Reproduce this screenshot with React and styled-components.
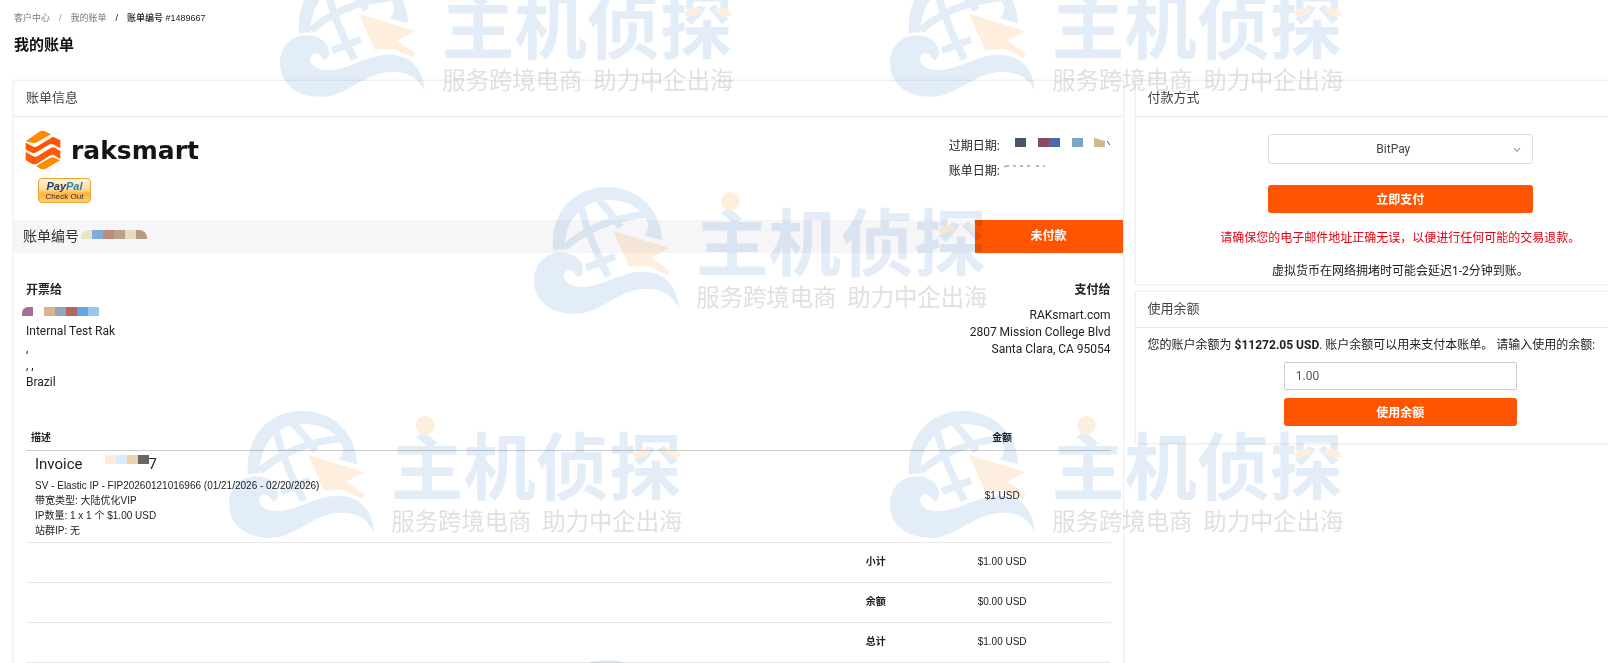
import React, { useState } from "react";
import styled, { createGlobalStyle } from "styled-components";

const GlobalStyle = createGlobalStyle`
  * {
    box-sizing: border-box;
  }
  body {
    margin: 0;
    background: #fff;
    color: #222;
    font-family: Roboto, "Noto Sans CJK SC", sans-serif;
    font-size: 12px;
    line-height: 17px;
  }
`;

const watermarks = [
  { left: 280, top: -30 },
  { left: 890, top: -30 },
  { left: 534, top: 187 },
  { left: 229, top: 411 },
  { left: 890, top: 411 },
  { left: 534, top: 660 },
];

const totals = [
  { label: "小计", value: "$1.00 USD" },
  { label: "余额", value: "$0.00 USD" },
  { label: "总计", value: "$1.00 USD" },
];

function Watermark({ left, top }) {
  return (
    <WatermarkSvg
      style={{ left, top }}
      width="454"
      height="128"
      viewBox="43 52 1362 384"
      aria-hidden="true"
    >
      <g fill="#e2edf8">
        <path d="M100 243C90 120 170 52 263 52C355 52 425 120 427 212L371 197Q385 188 386 165C372 115 320 90 263 90C190 92 133 150 135 240Q118 238 100 243Z" />
        <path d="M478 415C470 330 420 305 365 306C300 308 250 352 185 352C150 352 132 335 133 318C135 300 155 296 165 310Q170 318 175 323Q190 320 190 298C188 265 155 248 120 248C75 250 43 285 43 330C43 395 95 432 165 432C250 432 290 357 385 357C430 357 460 380 478 415Z" />
        <g fill="none" stroke="#e2edf8" strokeWidth="22">
          <path d="M136 232Q230 150 378 134" />
          <path d="M184 108Q200 190 266 320" />
          <path d="M236 90Q268 122 302 172" />
          <path d="M199 294L286 260" />
        </g>
        <text x="528" y="301" fontSize="218" fontWeight="700">
          主机侦探
        </text>
      </g>
      <g fill="#feeedd">
        <path d="M280 183L448 235L395 264L450 303L442 315L385 288L328 292Z" />
        <circle cx="632" cy="95" r="28" />
        <ellipse cx="1282" cy="178" rx="27" ry="11" transform="rotate(-16 1282 178)" />
        <ellipse cx="1372" cy="178" rx="27" ry="11" transform="rotate(16 1372 178)" />
      </g>
      <g fontSize="70" fill="#e0e0e0">
        <text x="530" y="408">
          服务跨境电商
        </text>
        <text x="983" y="408">
          助力中企出海
        </text>
      </g>
    </WatermarkSvg>
  );
}

function Mosaic({ colors, round }) {
  return (
    <MosaicStrip $round={round}>
      {colors.map((color, i) => (
        <MosaicTile key={i} $color={color} />
      ))}
    </MosaicStrip>
  );
}

function Logo() {
  return (
    <Brand href="#">
      <svg width="36" height="40" viewBox="0 0 108 120" aria-hidden="true">
        <path d="M2 34L45 4Q53 0 60 4L78 13L36 37Q28 41 20 38L2 34Z" fill="#ff8a00" />
        <path d="M2 38L25 50Q31 53 37 49L84 20L106 31V55L84 43Q78 40 72 44L34 67Q26 72 18 67L2 58Z" fill="#ff5500" />
        <path d="M2 66L24 78Q31 82 38 78L78 53Q84 50 90 53L106 63V88L90 77Q82 72 74 77L36 101Q28 105 20 101L2 90Z" fill="#ff5a0a" />
        <path d="M34 108L76 83Q82 80 88 83L106 91L62 116Q54 120 46 116Z" fill="#ff8a00" />
      </svg>
      raksmart
    </Brand>
  );
}

export default function App() {
  const [gateway, setGateway] = useState("BitPay");
  const [credit, setCredit] = useState("1.00");

  return (
    <Page>
      <GlobalStyle />
      <Breadcrumb>
        <Crumb href="#">客户中心</Crumb>
        <span>/</span>
        <Crumb href="#">我的账单</Crumb>
        <CurrentCrumb>/</CurrentCrumb>
        <CurrentCrumb>账单编号 #1489667</CurrentCrumb>
      </Breadcrumb>
      <PageTitle>我的账单</PageTitle>

      <Columns>
        <InvoiceCard>
          <CardHeader>账单信息</CardHeader>
          <InvoiceTop>
            <div>
              <Logo />
              <PaypalButton type="button">
                <PaypalName>
                  Pay<span>Pal</span>
                </PaypalName>
                Check Out
              </PaypalButton>
            </div>
            <Dates>
              <DateRow>
                过期日期:
                <svg width="111" height="25" aria-hidden="true">
                  <rect x="15" y="4" width="11" height="9" fill="#4a5566" />
                  <rect x="38" y="4" width="11" height="9" fill="#8a4a63" />
                  <rect x="49" y="4" width="11" height="9" fill="#4d69a9" />
                  <rect x="72" y="4" width="11" height="9" fill="#7ba6c6" />
                  <path d="M94 4L105 7V13H94Z" fill="#cdb98f" />
                  <path d="M107 7L110 11" stroke="#44586a" />
                </svg>
              </DateRow>
              <DateRow>
                账单日期:
                <svg width="111" height="25" aria-hidden="true">
                  <path d="M4 8l2-1h3M13 7h3M20 7h3M27 7h3M36 7h3M43 7h2" stroke="#777" fill="none" />
                </svg>
              </DateRow>
            </Dates>
          </InvoiceTop>

          <NumberBar>
            <InvoiceNumber>
              账单编号
              <Mosaic
                round
                colors={["#e8e3c4", "#80addb", "#b98b7b", "#b8a288", "#ead9c5", "#b89a80"]}
              />
            </InvoiceNumber>
            <Status>未付款</Status>
          </NumberBar>

          <Parties>
            <div>
              <PartyTitle>开票给</PartyTitle>
              <MaskedLine>
                <Mosaic
                  colors={["#a46f94", "transparent", "#d7b48c", "#93a3c0", "#b16762", "#65a5e2", "#9bc7ef"]}
                />
              </MaskedLine>
              Internal Test Rak
              <br />
              ,
              <br />
              , ,
              <br />
              Brazil
            </div>
            <PayTo>
              <PartyTitle>支付给</PartyTitle>
              RAKsmart.com
              <br />
              2807 Mission College Blvd
              <br />
              Santa Clara, CA 95054
            </PayTo>
          </Parties>

          <ItemTable>
            <thead>
              <tr>
                <HeadCell $left>描述</HeadCell>
                <HeadCell $amount>金额</HeadCell>
              </tr>
            </thead>
            <tbody>
              <tr>
                <ItemCell>
                  <ItemName>
                    Invoice
                    <ItemMask>
                      <Mosaic
                        colors={["transparent", "transparent", "#fdecdb", "#dbeafa", "#ead4b0", "#6a655f"]}
                      />
                      7
                    </ItemMask>
                  </ItemName>
                  SV - Elastic IP - FIP20260121016966 (01/21/2026 - 02/20/2026)
                  <br />
                  带宽类型: 大陆优化VIP
                  <br />
                  IP数量: 1 x 1 个 $1.00 USD
                  <br />
                  站群IP: 无
                </ItemCell>
                <ValueCell>$1 USD</ValueCell>
              </tr>
              {totals.map((row) => (
                <tr key={row.label}>
                  <TotalLabel scope="row">{row.label}</TotalLabel>
                  <ValueCell>{row.value}</ValueCell>
                </tr>
              ))}
            </tbody>
          </ItemTable>
        </InvoiceCard>

        <Side>
          <Card>
            <CardHeader>付款方式</CardHeader>
            <PayBody>
              <SelectWrap>
                <GatewaySelect
                  aria-label="付款方式"
                  value={gateway}
                  onChange={(e) => setGateway(e.target.value)}
                >
                  <option>BitPay</option>
                </GatewaySelect>
                <Chevron width="8" height="6" viewBox="0 0 8 6" aria-hidden="true">
                  <path d="M1 1L4 4.5L7 1" fill="none" stroke="#777" />
                </Chevron>
              </SelectWrap>
              <OrangeButton type="button" $width="50%">
                立即支付
              </OrangeButton>
              <Warning>请确保您的电子邮件地址正确无误，以便进行任何可能的交易退款。</Warning>
              <Hint>虚拟货币在网络拥堵时可能会延迟1-2分钟到账。</Hint>
            </PayBody>
          </Card>

          <Card>
            <CardHeader>使用余额</CardHeader>
            <CreditForm onSubmit={(e) => e.preventDefault()}>
              <CreditLabel htmlFor="credit">
                您的账户余额为 <b>$11272.05 USD</b>. 账户余额可以用来支付本账单。 请输入使用的余额:
              </CreditLabel>
              <CreditInput
                id="credit"
                type="text"
                value={credit}
                onChange={(e) => setCredit(e.target.value)}
              />
              <OrangeButton type="submit" $width="44%">
                使用余额
              </OrangeButton>
            </CreditForm>
          </Card>
        </Side>
      </Columns>

      <WatermarkLayer>
        {watermarks.map((mark, i) => (
          <Watermark key={i} {...mark} />
        ))}
      </WatermarkLayer>
    </Page>
  );
}

const Page = styled.main`
  position: relative;
  min-height: 100vh;
  padding: 9px 0 0 13px;
  overflow: hidden;
`;

const Breadcrumb = styled.nav`
  display: flex;
  gap: 9px;
  padding-left: 1px;
  font-family: "Liberation Sans", "Noto Sans CJK SC", sans-serif;
  font-size: 9px;
  line-height: 18px;
  color: #999;
`;

const Crumb = styled.a`
  color: #777;
  text-decoration: none;
`;

const CurrentCrumb = styled.span`
  color: #222;
  font-weight: 500;
`;

const PageTitle = styled.h1`
  margin: 8px 0 25px;
  padding-left: 1px;
  font-size: 15px;
  line-height: 20px;
  font-weight: 700;
  color: #111;
`;

const Columns = styled.div`
  display: grid;
  grid-template-columns: minmax(0, 209fr) minmax(0, 100fr);
  gap: 11px;
  margin-right: -58px;
`;

const Card = styled.section`
  border: 1px solid #efefef;
  box-shadow: 0 0 3px rgba(0, 0, 0, 0.06);
`;

const InvoiceCard = styled(Card)`
  padding-bottom: 24px;
`;

const CardHeader = styled.h2`
  margin: 0;
  padding: 0 12px;
  height: 36px;
  border-bottom: 1px solid #e6e6e6;
  font-size: 13px;
  line-height: 33px;
  font-weight: 400;
  color: #444;
`;

const Side = styled.div`
  display: flex;
  flex-direction: column;
  gap: 6px;
`;

const InvoiceTop = styled.div`
  display: flex;
  justify-content: space-between;
  padding: 13px 12px 17px 11px;
`;

const Brand = styled.a`
  display: flex;
  align-items: center;
  gap: 10px;
  height: 40px;
  color: #151515;
  font-family: "DejaVu Sans", sans-serif;
  font-size: 25px;
  font-weight: 700;
  text-decoration: none;
`;

const PaypalButton = styled.button`
  display: flex;
  flex-direction: column;
  align-items: center;
  justify-content: center;
  width: 53px;
  height: 25px;
  margin: 8px 0 0 13px;
  padding: 0;
  border: 1px solid #efa52b;
  border-radius: 4px;
  background: linear-gradient(#fff3dc, #ffdc9c 45%, #ffb23a 65%, #ffcf78);
  color: #2b2b2b;
  font-family: "Liberation Sans", sans-serif;
  font-size: 8px;
  line-height: 9px;
`;

const PaypalName = styled.strong`
  font-size: 11px;
  line-height: 12px;
  font-style: italic;
  color: #1f3a70;

  span {
    color: #2a7fb4;
  }
`;

const Dates = styled.div`
  padding-top: 4px;
`;

const DateRow = styled.div`
  display: flex;
  line-height: 25px;
`;

const NumberBar = styled.div`
  display: flex;
  align-items: stretch;
  justify-content: space-between;
  height: 33px;
  background: #f6f6f8;
`;

const InvoiceNumber = styled.div`
  display: flex;
  align-items: center;
  gap: 2px;
  padding-left: 9px;
  font-size: 14px;
  color: #333;

  > span {
    margin-bottom: 5px;
  }
`;

const Status = styled.div`
  width: 148px;
  background: #ff5500;
  color: #fff;
  font-weight: 700;
  line-height: 32px;
  text-align: center;
`;

const MosaicStrip = styled.span`
  display: inline-flex;
  height: 9px;
  overflow: hidden;
  border-radius: ${(props) => (props.$round ? "8px 8px 0 0" : "6px 0 0 0")};
`;

const MosaicTile = styled.span`
  width: 11px;
  background: ${(props) => props.$color};
`;

const Parties = styled.div`
  display: flex;
  justify-content: space-between;
  padding: 29px 12px 0;
`;

const PartyTitle = styled.h3`
  margin: 0 0 8px;
  font-size: 12px;
  line-height: 17px;
`;

const MaskedLine = styled.div`
  display: flex;
  height: 16px;
  margin-left: -4px;
`;

const PayTo = styled.div`
  text-align: right;
`;

const ItemTable = styled.table`
  width: calc(100% - 24px);
  margin: 33px 12px 0;
  border-collapse: collapse;
  font-family: "Liberation Sans", "Noto Sans CJK SC", sans-serif;
  font-size: 10px;
  line-height: 15px;
`;

const HeadCell = styled.th`
  width: ${(props) => (props.$amount ? "20%" : "80%")};
  height: 26px;
  padding: 2px 5px 0;
  border-bottom: 1px solid #ccc;
  text-align: ${(props) => (props.$left ? "left" : "center")};
`;

const ItemCell = styled.td`
  height: 92px;
  padding: 0 9px 1px;
  border-bottom: 1px solid #e8e8e8;
`;

const ItemName = styled.div`
  display: flex;
  margin-bottom: 4px;
  font-family: Roboto, sans-serif;
  font-size: 15px;
  line-height: 20px;
`;

const ItemMask = styled.span`
  display: flex;
  align-items: center;

  > span {
    margin-bottom: 8px;
  }
`;

const TotalLabel = styled.th`
  height: 40px;
  padding: 0 8px 2px;
  border-bottom: 1px solid #e8e8e8;
  text-align: right;
`;

const ValueCell = styled.td`
  padding: 0 0 2px;
  border-bottom: 1px solid #e8e8e8;
  text-align: center;
`;

const PayBody = styled.div`
  display: flex;
  flex-direction: column;
  align-items: center;
  padding: 17px 0 4px;
`;

const SelectWrap = styled.div`
  position: relative;
  width: 50%;
  margin-bottom: 21px;
`;

const GatewaySelect = styled.select`
  display: block;
  width: 100%;
  height: 30px;
  padding: 0 26px 0 12px;
  appearance: none;
  border: 1px solid #ddd;
  border-radius: 3px;
  background: #fff;
  color: #444;
  font-family: inherit;
  font-size: 12px;
  text-align-last: center;
`;

const Chevron = styled.svg`
  position: absolute;
  right: 12px;
  top: 13px;
  pointer-events: none;
`;

const OrangeButton = styled.button`
  width: ${(props) => props.$width};
  height: 28px;
  padding: 0 0 2px;
  border: none;
  border-radius: 3px;
  background: #ff5500;
  color: #fff;
  font-family: inherit;
  font-size: 12px;
  font-weight: 700;
  cursor: pointer;
`;

const Warning = styled.p`
  margin: 17px 0 16px;
  color: #e60012;
`;

const Hint = styled.p`
  margin: 0;
`;

const CreditForm = styled.form`
  display: flex;
  flex-direction: column;
  align-items: center;
  gap: 8px;
  padding: 9px 0 17px;
`;

const CreditLabel = styled.label`
  align-self: stretch;
  padding: 0 12px;
`;

const CreditInput = styled.input`
  width: 44%;
  height: 28px;
  padding: 0 11px;
  border: 1px solid #ccc;
  border-radius: 2px;
  color: #555;
  font-family: inherit;
  font-size: 12px;
`;

const WatermarkLayer = styled.div`
  position: absolute;
  inset: 0;
  overflow: hidden;
  pointer-events: none;
  mix-blend-mode: multiply;
`;

const WatermarkSvg = styled.svg`
  position: absolute;
  font-family: "Noto Sans CJK SC", sans-serif;
`;
